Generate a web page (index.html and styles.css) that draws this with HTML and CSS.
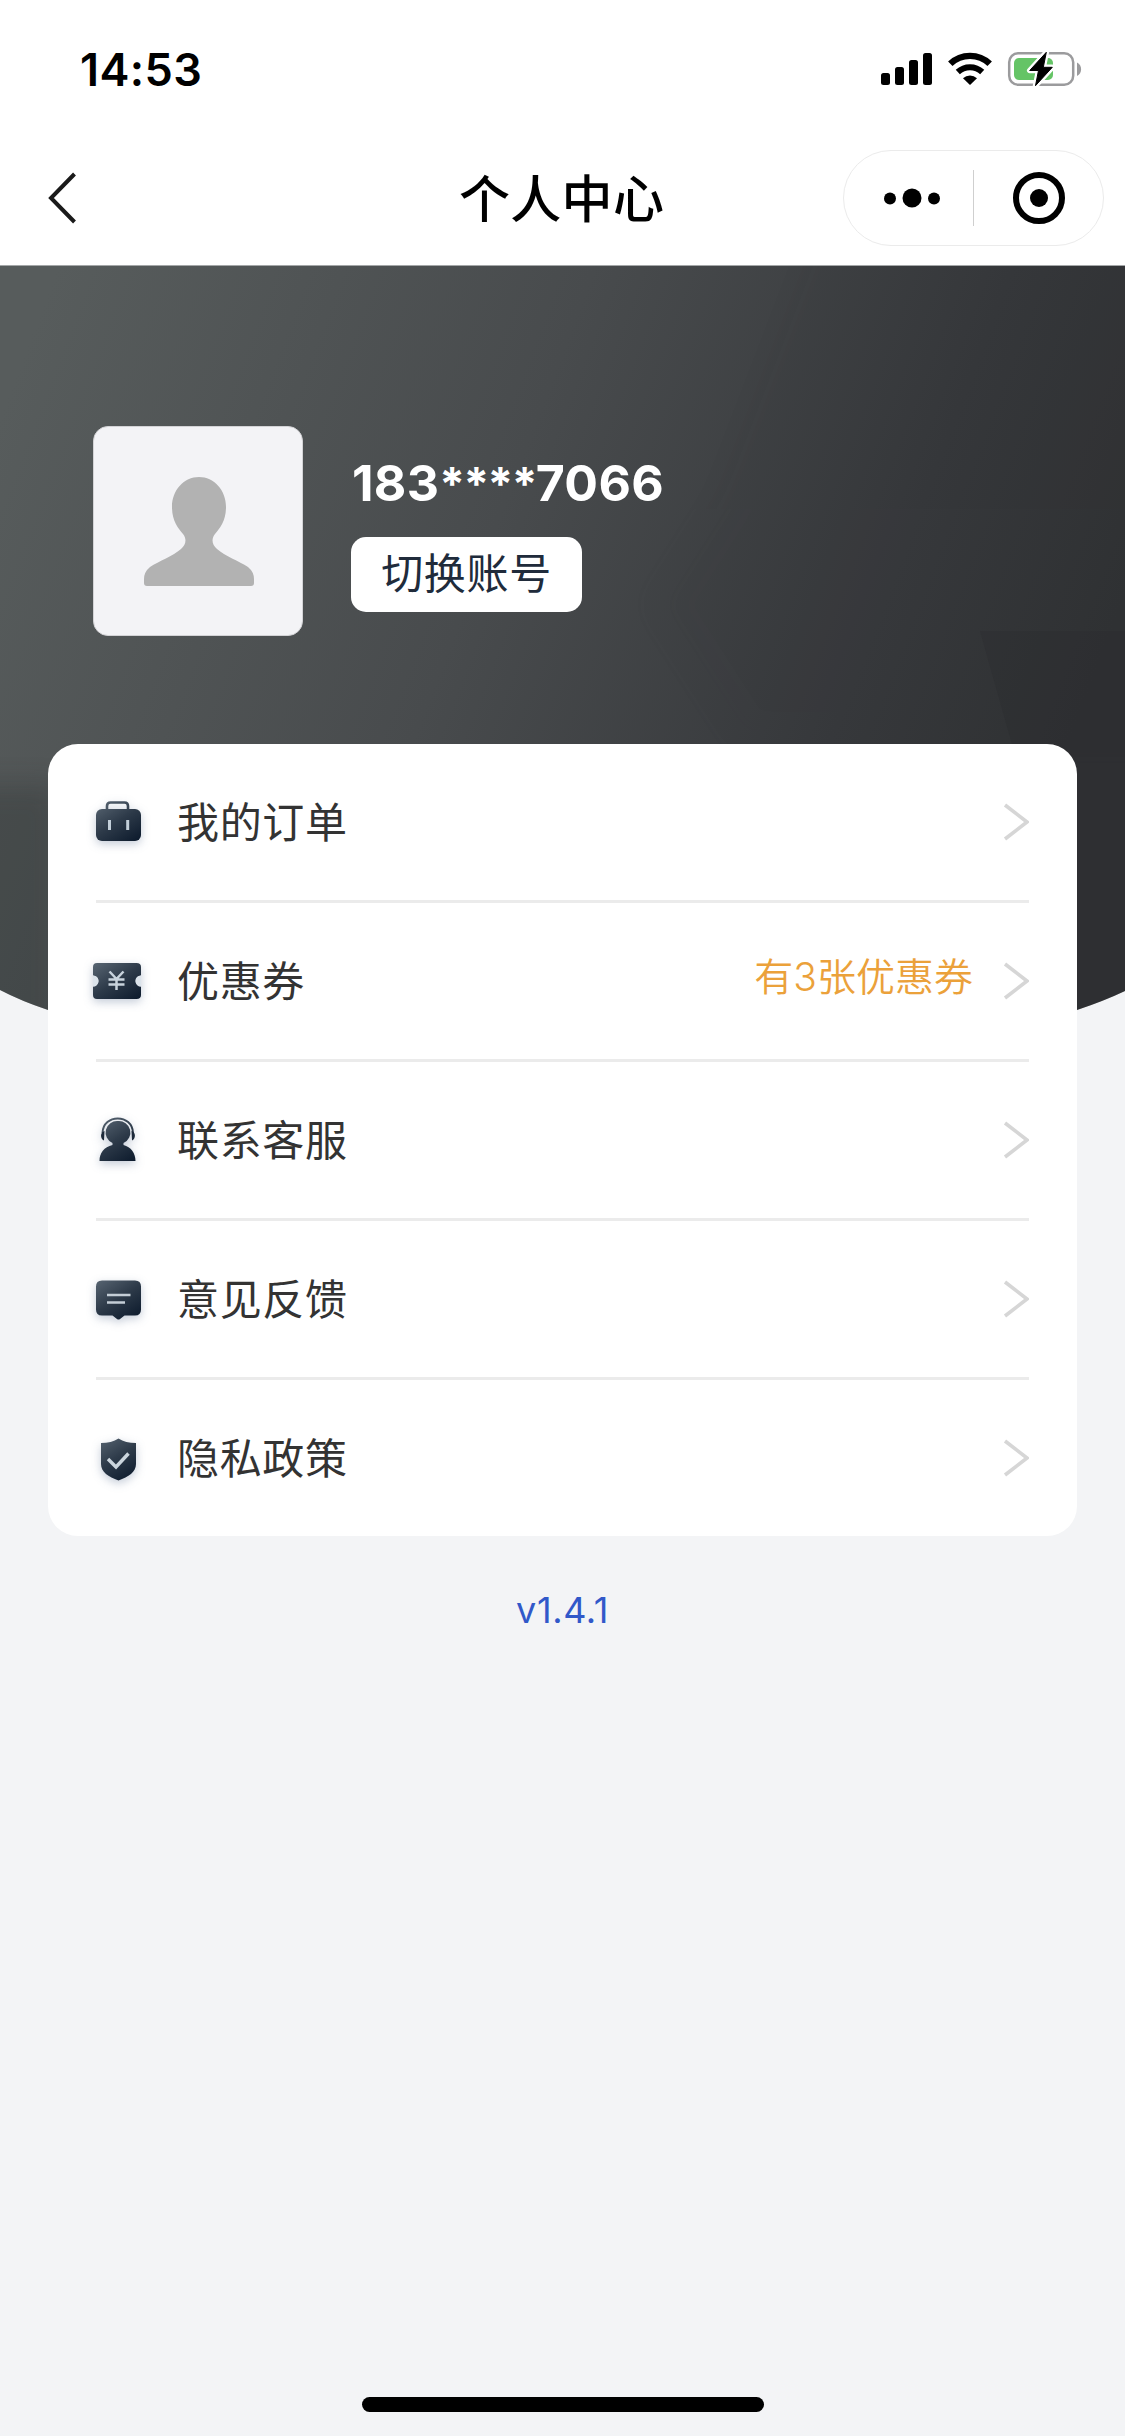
FILE: index.html
```html
<!DOCTYPE html>
<html lang="zh-CN">
<head>
<meta charset="utf-8">
<title>个人中心</title>
<link rel="stylesheet" href="styles.css">
</head>
<body>
<div class="page">
  <header class="top">
    <div class="status">
      <span class="time">14:53</span>
      <svg class="status-icons" width="204" height="40" viewBox="880 50 204 40">
        <rect x="882" y="73" width="9" height="12" rx="2.5"/>
        <rect x="896" y="67" width="9" height="18" rx="2.5"/>
        <rect x="910" y="60" width="9" height="25" rx="2.5"/>
        <rect x="924" y="53" width="9" height="32" rx="2.5"/>
        <path d="M951.3 63.8a28.5 28.5 0 0 1 39.4 0" fill="none" stroke="#000" stroke-width="6.4"/>
        <path d="M958.8 72a17.8 17.8 0 0 1 24.4 0" fill="none" stroke="#000" stroke-width="6"/>
        <path d="M964 78.200a10.500 10.500 0 0 1 14 0L971 85z"/>
        <rect x="1010.200" y="53.200" width="64" height="31.600" rx="9" fill="none" stroke="#9b9b9d" stroke-width="2.500"/>
        <path d="M1078 62.500c5.500 2.500 5.500 11 0 13.500z" fill="#9b9b9d"/>
        <rect x="1015" y="58" width="39" height="22" rx="5" fill="#65c466"/>
        <path d="M1047.300 52.300L1030.700 70.500H1039.500L1036.500 85.700L1053.300 67.300H1044.300Z" fill="#000" stroke="#fff" stroke-width="5.500" stroke-linejoin="round"/>
        <path d="M1047.300 52.300L1030.700 70.500H1039.500L1036.500 85.700L1053.300 67.300H1044.300Z" stroke="#000" stroke-width="1" stroke-linejoin="round"/>
      </svg>
    </div>
    <nav class="nav">
      <svg class="back" width="32" height="54" viewBox="0 0 32 54"><path d="M27.500 3L4 27L27.500 51" fill="none" stroke="#1a1a1a" stroke-width="4"/></svg>
      <h1 class="title">个人中心</h1>
      <div class="capsule">
        <svg class="dots" width="58" height="20" viewBox="0 0 58 20"><circle cx="7" cy="10.500" r="6"/><circle cx="29" cy="10" r="9.500"/><circle cx="51" cy="10.500" r="6"/></svg>
        <span class="capsule-line"></span>
        <svg class="target" width="52" height="52" viewBox="0 0 52 52"><circle cx="26" cy="26" r="23" fill="none" stroke="#000" stroke-width="6"/><circle cx="26" cy="26" r="9"/></svg>
      </div>
    </nav>
  </header>

  <main class="main">
    <svg class="hero-art" width="1125" height="840" viewBox="0 0 1125 840">
      <defs>
        <linearGradient id="heroFill" gradientUnits="userSpaceOnUse" x1="20" y1="100" x2="1060" y2="500">
          <stop offset="0" stop-color="#575c5c"/><stop offset=".45" stop-color="#484b4d"/><stop offset=".8" stop-color="#37393c"/><stop offset="1" stop-color="#303234"/>
        </linearGradient>
        <filter id="soften" x="-20%" y="-20%" width="140%" height="140%"><feGaussianBlur stdDeviation="14"/></filter>
        <clipPath id="heroEdge"><path d="M0 0H1125V726Q1104 736 1077 745Q562 900 48 745Q21 736 0 725Z"/></clipPath>
      </defs>
      <g clip-path="url(#heroEdge)">
        <rect width="1125" height="840" fill="url(#heroFill)"/>
        <path d="M820 -30L720 230L650 340L740 480H1155V-30Z" fill="#202328" opacity=".04" filter="url(#soften)"/>
        <path d="M980 366H1125V840H1060L1015 490Z" fill="#27282a" opacity=".25"/>
        <path d="M-40 520H60V840H-40Z" fill="#2a2d2f" opacity=".3" filter="url(#soften)"/>
        <rect width="1125" height="1" fill="#a4a7a8"/>
      </g>
    </svg>

    <div class="content">
      <section class="profile">
        <div class="avatar">
          <svg width="110" height="109" viewBox="0 0 110 109"><path d="M55 0C70 0 82 13 82 30C82 44 76 51 71 57C67 62 68 68 73 72C81 79 95 84 104 90Q110 95 110 102V106Q110 109 107 109H3Q0 109 0 106V102Q0 95 6 90C15 84 29 79 37 72C42 68 43 62 39 57C34 51 28 44 28 30C28 13 40 0 55 0Z" fill="#b2b2b2"/></svg>
        </div>
        <div class="account">
          <div class="phone">183<span class="mask">****</span>7066</div>
          <button class="switch">切换账号</button>
        </div>
      </section>

      <ul class="menu">
        <li class="row">
          <svg class="icon" width="60" height="60" viewBox="0 0 60 60">
            <defs><linearGradient id="ink" gradientUnits="userSpaceOnUse" x1="14" y1="8" x2="42" y2="52"><stop offset="0" stop-color="#566370"/><stop offset=".5" stop-color="#2d3a49"/><stop offset="1" stop-color="#0e1c2e"/></linearGradient></defs>
            <path d="M18 18V14Q18 10.500 21.500 10.500H35.500Q39 10.500 39 14V18" fill="none" stroke="url(#ink)" stroke-width="2.600"/>
            <rect x="7" y="17" width="45" height="32" rx="6" fill="url(#ink)"/>
            <path d="M20.500 28V38M38.700 28V38" stroke="#c3cfd9" stroke-width="3"/>
          </svg>
          <span class="label">我的订单</span>
          <svg class="arrow" width="26" height="38" viewBox="0 0 26 38"><path d="M2 2L24 19L2 36" /></svg>
        </li>
        <li class="row">
          <svg class="icon" width="60" height="60" viewBox="0 0 60 60">
            <path d="M8 12H47.500Q52 12 52 16V24.500A5.500 5.500 0 0 0 52 35.500V44Q52 48 47.500 48H8Q4 48 4 44V35.500A5.500 5.500 0 0 0 4 24.500V16Q4 12 8 12Z" fill="url(#ink)"/>
            <path d="M4 24.500A5.500 5.500 0 0 1 4 35.500ZM52 24.500A5.500 5.500 0 0 0 52 35.500Z" fill="#dce4eb"/>
            <path d="M20.500 20.500L27.500 28L34.500 20.500M19.500 28.500H35.500M19.500 33.500H35.500M27.500 28V39" fill="none" stroke="#c9d4dd" stroke-width="2.500"/>
          </svg>
          <span class="label">优惠券</span>
          <span class="note">有3张优惠券</span>
          <svg class="arrow" width="26" height="38" viewBox="0 0 26 38"><path d="M2 2L24 19L2 36" /></svg>
        </li>
        <li class="row">
          <svg class="icon" width="60" height="60" viewBox="0 0 60 60">
            <path d="M13.500 23C14 3.500 43.500 3.500 44 23" fill="none" stroke="url(#ink)" stroke-width="2"/>
            <path d="M15.500 21C11 22 11 29 15 30.500ZM42.500 21C47 22 47 29 43 30.500Z" fill="#1c2939"/>
            <path d="M29 11A11.500 11.500 0 0 1 34.500 33V35C42 37 46.500 43 46.500 51H10.500C10.500 43 15 37 23.500 35V33A11.500 11.500 0 0 1 29 11Z" fill="url(#ink)"/>
          </svg>
          <span class="label">联系客服</span>
          <svg class="arrow" width="26" height="38" viewBox="0 0 26 38"><path d="M2 2L24 19L2 36" /></svg>
        </li>
        <li class="row">
          <svg class="icon" width="60" height="60" viewBox="0 0 60 60">
            <path d="M13 11.500H46Q52 11.500 52 17.500V40.500Q52 46.500 46 46.500H35.500L31 50Q29.500 51 28 50L23.500 46.500H13Q7 46.500 7 40.500V17.500Q7 11.500 13 11.500Z" fill="url(#ink)"/>
            <path d="M18 26H41.500M18 33.500H36" stroke="#c3cdd6" stroke-width="2.600"/>
          </svg>
          <span class="label">意见反馈</span>
          <svg class="arrow" width="26" height="38" viewBox="0 0 26 38"><path d="M2 2L24 19L2 36" /></svg>
        </li>
        <li class="row">
          <svg class="icon" width="60" height="60" viewBox="0 0 60 60">
            <path d="M29.500 10.500Q36.500 15 47 15V36C47 44 39.500 49 29.500 52.500C19.500 49 12 44 12 36V15Q22.500 15 29.500 10.500Z" fill="url(#ink)"/>
            <path d="M19 31L27 39L39.500 25.500" fill="none" stroke="#cbd5dd" stroke-width="3.400"/>
          </svg>
          <span class="label">隐私政策</span>
          <svg class="arrow" width="26" height="38" viewBox="0 0 26 38"><path d="M2 2L24 19L2 36" /></svg>
        </li>
      </ul>
      <div class="version">v1.4.1</div>
    </div>
  </main>
  <div class="home-bar"></div>
</div>
</body>
</html>
```
FILE: styles.css
```css
* { box-sizing: border-box; }
body { margin: 0; background: #f3f4f6; font-family: Inter, "Noto Sans CJK SC", sans-serif; }
.page { width: 1125px; height: 2436px; display: flex; flex-direction: column; overflow: hidden; }
svg { display: block; flex: none; }

.top { height: 265px; background: #fff; flex: none; }
.status { height: 132px; display: flex; justify-content: space-between; padding: 42px 42px 0 80px; }
.time { height: 56px; line-height: 56px; font-size: 45px; font-weight: 600; letter-spacing: .4px; color: #000; }
.status-icons { margin-top: 8px; }
.nav { height: 132px; display: grid; grid-template-columns: 412px 1fr 261px; align-items: center; padding: 0 21px 0 47px; }
.title { margin: 0; padding-top: 3px; font-size: 51px; line-height: 72px; font-weight: 500; letter-spacing: .3px; color: #000; }
.capsule { width: 261px; height: 96px; border: 1.5px solid #ebebeb; border-radius: 48px; display: flex; align-items: center; padding-left: 39px; }
.capsule-line { width: 1px; height: 56px; background: #cfcfcf; margin-left: 32px; }
.target { margin-left: 39px; }

/* The hero artwork and the page content share one grid cell */
.main { display: grid; flex: 1; align-content: start; }
.hero-art, .content { grid-area: 1 / 1; }
.content { padding: 161px 48px 0; position: relative; }
.profile { display: flex; height: 318px; padding-left: 45px; align-items: flex-start; }
.avatar { width: 210px; height: 210px; border: 1px solid #d3d3d6; border-radius: 15px; background: #f3f3f6; display: flex; justify-content: center; padding: 50px 0 0 2px; }
.account { margin-left: 48px; padding-top: 26px; }
.phone { height: 62px; line-height: 62px; font-size: 50px; font-weight: 700; color: #fff; white-space: nowrap; padding-left: 1px; letter-spacing: .3px; }
.mask { font-size: 46px; letter-spacing: -1.6px; }
.switch { display: block; width: 231px; height: 75px; margin-top: 23px; padding: 0 0 1px; border: 0; border-radius: 15px; background: #fff; color: #202b3b; font: 400 42px/70px Inter, "Noto Sans CJK SC", sans-serif; letter-spacing: .65px; }

.menu { list-style: none; margin: 0; padding: 0 48px; height: 792px; background: #fff; border-radius: 30px; }
.row { height: 159px; border-bottom: 3px solid #ebebeb; display: flex; align-items: center; }
.row:last-child { height: 156px; border-bottom: 0; }
.icon { margin-left: -7px; filter: drop-shadow(0 3px 5px rgba(40, 70, 110, .28)); }
.label { flex: 1; margin-left: 28px; padding-top: 1px; font-size: 42px; line-height: 60px; letter-spacing: .67px; color: #333; }
.note { font-size: 39px; line-height: 56px; color: #eba13a; margin: 0 30px 8px 0; font-weight: 350; }
.arrow path { fill: none; stroke: #d6d6d6; stroke-width: 3.600; }
.version { margin-top: 48px; text-align: center; font-size: 36px; line-height: 52px; letter-spacing: .6px; color: #3158c9; }
.home-bar { width: 402px; height: 15px; margin: 0 0 24px 362px; border-radius: 8px; background: #000; flex: none; }
```
